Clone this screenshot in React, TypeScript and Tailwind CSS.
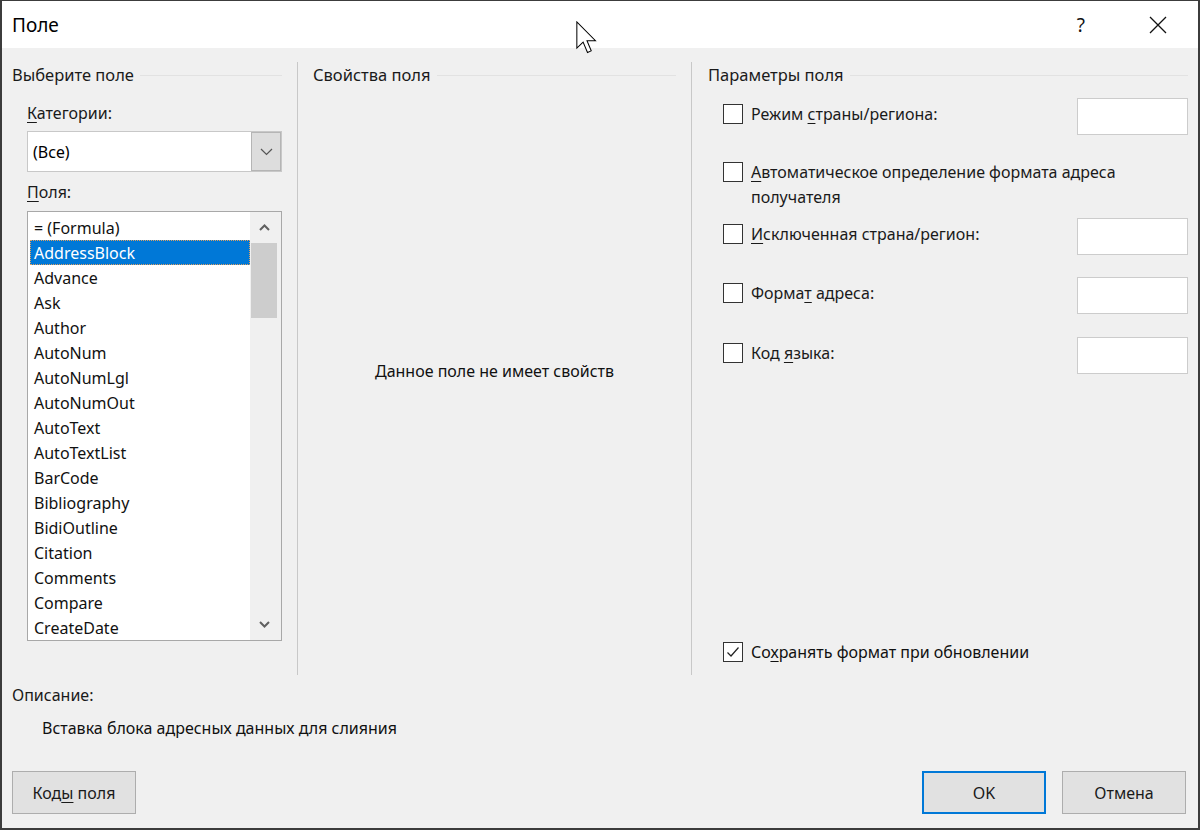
import { ReactNode } from 'react';

const fields = [
  '= (Formula)',
  'AddressBlock',
  'Advance',
  'Ask',
  'Author',
  'AutoNum',
  'AutoNumLgl',
  'AutoNumOut',
  'AutoText',
  'AutoTextList',
  'BarCode',
  'Bibliography',
  'BidiOutline',
  'Citation',
  'Comments',
  'Compare',
  'CreateDate',
];

// Group box caption with the thin etched line running to the right
const GroupHeader = ({ title }: { title: string }) => (
  <div className="flex h-[26px] items-center">
    <span className="whitespace-nowrap text-[16.5px] text-[#1a1a1a]">{title}</span>
    <div className="ml-[6px] h-px flex-1 bg-[#e2e2e2]" />
  </div>
);

const Checkbox = ({ checked = false }: { checked?: boolean }) => (
  <div className="flex h-[20px] w-[20px] shrink-0 items-center justify-center border border-[#333333] bg-white">
    {checked && (
      <svg width="16" height="16" viewBox="0 0 16 16" fill="none">
        <path d="M2.5 8.5 L6 12 L13.5 3.5" stroke="#222" strokeWidth="1.2" />
      </svg>
    )}
  </div>
);

const TextBox = () => <div className="h-[37px] w-[111px] shrink-0 border border-[#cccccc] bg-white" />;

const OptionRow = ({ label }: { label: ReactNode }) => (
  <div className="flex h-[37px] items-start">
    <div className="ml-[15px] mt-[5px] flex flex-1 items-center gap-[8px]">
      <Checkbox />
      <span className="text-[16px] text-[#1a1a1a]">{label}</span>
    </div>
    <TextBox />
  </div>
);

const Button = ({ children, primary = false }: { children: ReactNode; primary?: boolean }) => (
  <div
    className={
      primary
        ? 'flex h-[43px] w-[124px] items-center justify-center border-2 border-[#0078d7] bg-[#e1e1e1] text-[16px] text-[#1a1a1a]'
        : 'flex h-[43px] w-[124px] items-center justify-center border border-[#adadad] bg-[#e1e1e1] text-[16px] text-[#1a1a1a]'
    }
  >
    <span>{children}</span>
  </div>
);

export default function App() {
  return (
    <div className="relative flex h-[830px] w-[1200px] flex-col border-x-2 border-b-2 border-t border-[#3c3c3c] bg-[#f0f0f0] font-['Noto_Sans',sans-serif] leading-[22px] text-black">
      {/* Title bar */}
      <div className="flex h-[47px] shrink-0 items-center bg-white pl-[10px]">
        <span className="text-[19px] text-black">Поле</span>
        <div className="flex-1" />
        <span className="mr-[64px] text-[19px] text-[#111]">?</span>
        <svg className="mr-[31px]" width="18" height="18" viewBox="0 0 18 18">
          <path d="M1 1 L17 17 M17 1 L1 17" stroke="#111" strokeWidth="1.3" />
        </svg>
      </div>

      {/* Three columns */}
      <div className="mt-[14px] flex h-[613px] shrink-0">
        {/* Left: field chooser */}
        <div className="flex w-[295px] shrink-0 flex-col pl-[10px] pr-[15px]">
          <GroupHeader title="Выберите поле" />
          <div className="ml-[15px] flex flex-col">
            <span className="mt-[14px] text-[16px] text-[#1a1a1a]">
              <span className="underline underline-offset-[3px]">К</span>атегории:
            </span>
            <div className="mt-[7px] flex h-[41px] border border-[#c8c8c8] bg-white">
              <div className="flex flex-1 items-center pl-[5px] text-[16px]">(Все)</div>
              <div className="flex w-[30px] items-center justify-center border border-[#b5b5b5] bg-[#dddddd]">
                <svg width="13" height="8" viewBox="0 0 13 8" fill="none">
                  <path d="M1 1 L6.5 6.5 L12 1" stroke="#555" strokeWidth="1.2" />
                </svg>
              </div>
            </div>
            <span className="mt-[9px] text-[16px] text-[#1a1a1a]">
              <span className="underline underline-offset-[3px]">П</span>оля:
            </span>
            <div className="mt-[8px] flex h-[430px] border border-[#a8a8a8] bg-white">
              <div className="flex flex-1 flex-col pl-[2px] pt-[3px]">
                {fields.map((f) => (
                  <div
                    key={f}
                    className={
                      f === 'AddressBlock'
                        ? 'flex h-[25.1px] items-center border border-dotted border-[#e0a060] bg-[#0078d7] pl-[3px] text-[16px] text-white'
                        : 'flex h-[25.1px] items-center pl-[4px] text-[16px] text-[#111]'
                    }
                  >
                    {f}
                  </div>
                ))}
              </div>
              <div className="flex w-[31px] flex-col bg-[#f0f0f0]">
                <div className="flex h-[31px] items-center justify-center pr-[3px]">
                  <svg width="11" height="7" viewBox="0 0 11 7" fill="none">
                    <path d="M1 6 L5.5 1.5 L10 6" stroke="#606060" strokeWidth="2" />
                  </svg>
                </div>
                <div className="ml-px h-[75px] w-[26px] bg-[#cdcdcd]" />
                <div className="flex-1" />
                <div className="flex h-[31px] items-center justify-center pr-[3px]">
                  <svg width="11" height="7" viewBox="0 0 11 7" fill="none">
                    <path d="M1 1 L5.5 5.5 L10 1" stroke="#606060" strokeWidth="2" />
                  </svg>
                </div>
              </div>
            </div>
          </div>
        </div>

        {/* Middle: field properties */}
        <div className="flex w-[394px] shrink-0 flex-col border-l border-[#c8c8c8] pl-[15px] pr-[15px]">
          <GroupHeader title="Свойства поля" />
          <div className="mt-[272px] text-center text-[16px] text-[#111]">Данное поле не имеет свойств</div>
        </div>

        {/* Right: field options */}
        <div className="flex flex-1 flex-col border-l border-[#c8c8c8] pl-[16px] pr-[10px]">
          <GroupHeader title="Параметры поля" />
          <div className="mt-[10px]">
            <OptionRow
              label={
                <>
                  Режим <span className="underline underline-offset-[3px]">с</span>траны/региона:
                </>
              }
            />
          </div>
          <div className="ml-[15px] mt-[25px] flex items-start gap-[8px]">
            <div className="mt-[2px]">
              <Checkbox />
            </div>
            <span className="text-[16px] leading-[25px] text-[#1a1a1a]">
              <span className="underline underline-offset-[3px]">А</span>втоматическое определение формата адреса
              <br />
              получателя
            </span>
          </div>
          <div className="mt-[8px]">
            <OptionRow
              label={
                <>
                  <span className="underline underline-offset-[3px]">И</span>сключенная страна/регион:
                </>
              }
            />
          </div>
          <div className="mt-[22px]">
            <OptionRow
              label={
                <>
                  Форма<span className="underline underline-offset-[3px]">т</span> адреса:
                </>
              }
            />
          </div>
          <div className="mt-[23px]">
            <OptionRow
              label={
                <>
                  Код <span className="underline underline-offset-[3px]">я</span>зыка:
                </>
              }
            />
          </div>
          <div className="flex-1" />
          <div className="mb-[12px] ml-[15px] flex items-center gap-[8px]">
            <Checkbox checked />
            <span className="text-[16px] text-[#111]">
              Со<span className="underline underline-offset-[3px]">х</span>ранять формат при обновлении
            </span>
          </div>
        </div>
      </div>

      {/* Description */}
      <div className="mt-[9px] pl-[10px] text-[16px] text-[#1a1a1a]">Описание:</div>
      <div className="mt-[11px] pl-[40px] text-[16px] text-[#111]">Вставка блока адресных данных для слияния</div>

      {/* Buttons */}
      <div className="mt-[32px] flex pl-[10px] pr-[12px]">
        <Button>
          Код<span className="underline underline-offset-[3px]">ы</span> поля
        </Button>
        <div className="flex-1" />
        <Button primary>OK</Button>
        <div className="w-[16px]" />
        <Button>Отмена</Button>
      </div>

      {/* Mouse pointer over the title bar */}
      <svg className="pointer-events-none absolute left-[574px] top-[20px]" width="22" height="34" viewBox="0 0 13 20">
        <path d="M0.5 0.5 L0.5 16 L4.2 12.4 L6.8 18.6 L9 17.6 L6.5 11.6 L11.5 11.6 Z" fill="white" stroke="black" strokeWidth="0.6" strokeLinejoin="miter" />
      </svg>
    </div>
  );
}
